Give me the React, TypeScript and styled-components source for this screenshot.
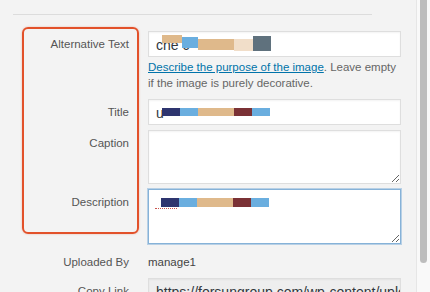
import styled, { createGlobalStyle } from "styled-components";

const GlobalStyle = createGlobalStyle`
    html, body {
        margin: 0;
        padding: 0;
        background: #f3f3f3;
    }
    * {
        box-sizing: border-box;
    }
`;

const Frame = styled.div({
    width: "430px",
    height: "292px",
    display: "flex",
    overflow: "hidden",
    background: "#f3f3f3",
    fontFamily: '"Liberation Sans", Arial, sans-serif',
});

const Content = styled.div({
    flex: 1,
    position: "relative",
    padding: "14px 0 0 13px",
});

const Divider = styled.div({
    width: "359px",
    height: "1px",
    background: "#dcdcdc",
    marginBottom: "16px",
});

const Row = styled.div<{ $mt?: number }>`
    display: grid;
    grid-template-columns: 116px 253px;
    column-gap: 19px;
    align-items: start;
    margin-top: ${(p) => p.$mt ?? 0}px;
`;

const Label = styled.div({
    textAlign: "right",
    fontSize: "11.5px",
    lineHeight: "16px",
    paddingTop: "5px",
    color: "#555",
});

const Field = styled.div<{ $h?: number; $muted?: boolean }>`
    position: relative;
    height: ${(p) => p.$h ?? 26}px;
    background: ${(p) => (p.$muted ? "#eeeeee" : "#fff")};
    border: 1px solid #dedede;
    box-shadow: inset 0 1px 2px rgba(0, 0, 0, 0.05);
    padding: 4px 7px 2px;
    font-size: 14px;
    line-height: 18px;
    color: #32373c;
    white-space: nowrap;
    overflow: hidden;
`;

const Area = styled.textarea<{ $h: number; $focus?: boolean }>`
    display: block;
    width: 253px;
    height: ${(p) => p.$h}px;
    margin: 0;
    resize: vertical;
    background: #fff;
    border: 1px solid ${(p) => (p.$focus ? "#86b2d8" : "#dedede")};
    box-shadow: ${(p) =>
        p.$focus ? "0 0 0 1px rgba(134, 178, 216, 0.55)" : "inset 0 1px 2px rgba(0,0,0,0.05)"};
    border-radius: 0;
    outline: none;
    font-family: inherit;
    font-size: 14px;
    padding: 6px 7px;
`;

const AreaWrap = styled.div({
    position: "relative",
});

const Help = styled.p({
    margin: "2px 0 0",
    fontSize: "11.5px",
    lineHeight: "16px",
    color: "#666",
});

const HelpLink = styled.a({
    color: "#0073aa",
    textDecoration: "underline",
});

const Value = styled.div({
    fontSize: "11.5px",
    lineHeight: "16px",
    paddingTop: "5px",
    color: "#444",
});

// pixelated redaction blocks sitting on top of the field text
const Redact = styled.span<{ $c: string }>`
    position: absolute;
    background: ${(p) => p.$c};
`;

const DottedMark = styled.span({
    position: "absolute",
    left: "7px",
    top: "19px",
    width: "22px",
    borderTop: "1.5px dotted #c9544d",
});

const Highlight = styled.div({
    position: "absolute",
    left: "22px",
    top: "27px",
    width: "117px",
    height: "207px",
    border: "2.5px solid #e2512a",
    borderRadius: "6px",
    boxShadow: "0 0 2px rgba(226, 81, 42, 0.4)",
    pointerEvents: "none",
});

const Scrollbar = styled.div({
    width: "14px",
    background: "#f9f9f9",
    borderLeft: "1px solid #e6e6e6",
    paddingLeft: "3px",
});

const Thumb = styled.div({
    width: "7px",
    height: "263px",
    background: "#bdbdbd",
    borderRadius: "0 0 4px 4px",
});

const C = {
    tan: "#dfb98b",
    blue: "#6aaedf",
    beige: "#f1dec9",
    slate: "#5f717d",
    navy: "#2e356f",
    maroon: "#7a3135",
};

const stripe = [
    { c: C.navy, l: 13, w: 18 },
    { c: C.blue, l: 31, w: 18 },
    { c: C.tan, l: 49, w: 36 },
    { c: C.maroon, l: 85, w: 18 },
    { c: C.blue, l: 103, w: 18 },
];

function Stripe({ top, h }: { top: number; h: number }) {
    return (
        <>
            {stripe.map((s, i) => (
                <Redact key={i} $c={s.c} style={{ left: s.l, top, width: s.w, height: h }} />
            ))}
        </>
    );
}

export default function App() {
    return (
        <Frame>
            <GlobalStyle />
            <Content>
                <Divider />
                <Row>
                    <Label>Alternative Text</Label>
                    <div>
                        <Field>
                            che c
                            <Redact $c={C.tan} style={{ left: 13, top: 3, width: 20, height: 8 }} />
                            <Redact $c={C.blue} style={{ left: 33, top: 5, width: 16, height: 11 }} />
                            <Redact $c={C.tan} style={{ left: 49, top: 7, width: 36, height: 11 }} />
                            <Redact $c={C.beige} style={{ left: 85, top: 7, width: 20, height: 12 }} />
                            <Redact $c={C.slate} style={{ left: 104, top: 4, width: 18, height: 15 }} />
                        </Field>
                        <Help>
                            <HelpLink href="#">Describe the purpose of the image</HelpLink>. Leave empty
                            <br />
                            if the image is purely decorative.
                        </Help>
                    </div>
                </Row>
                <Row $mt={8}>
                    <Label>Title</Label>
                    <Field>
                        u
                        <Stripe top={8} h={8} />
                    </Field>
                </Row>
                <Row $mt={5}>
                    <Label>Caption</Label>
                    <Area $h={54} />
                </Row>
                <Row $mt={5}>
                    <Label>Description</Label>
                    <AreaWrap>
                        <Area $h={55} $focus />
                        <Stripe top={9} h={9} />
                        <DottedMark />
                    </AreaWrap>
                </Row>
                <Row $mt={5}>
                    <Label>Uploaded By</Label>
                    <Value>manage1</Value>
                </Row>
                <Row $mt={8}>
                    <Label>Copy Link</Label>
                    <Field $muted>https://forsungroup.com/wp-content/uploads/2020/</Field>
                </Row>
                <Highlight />
            </Content>
            <Scrollbar>
                <Thumb />
            </Scrollbar>
        </Frame>
    );
}
